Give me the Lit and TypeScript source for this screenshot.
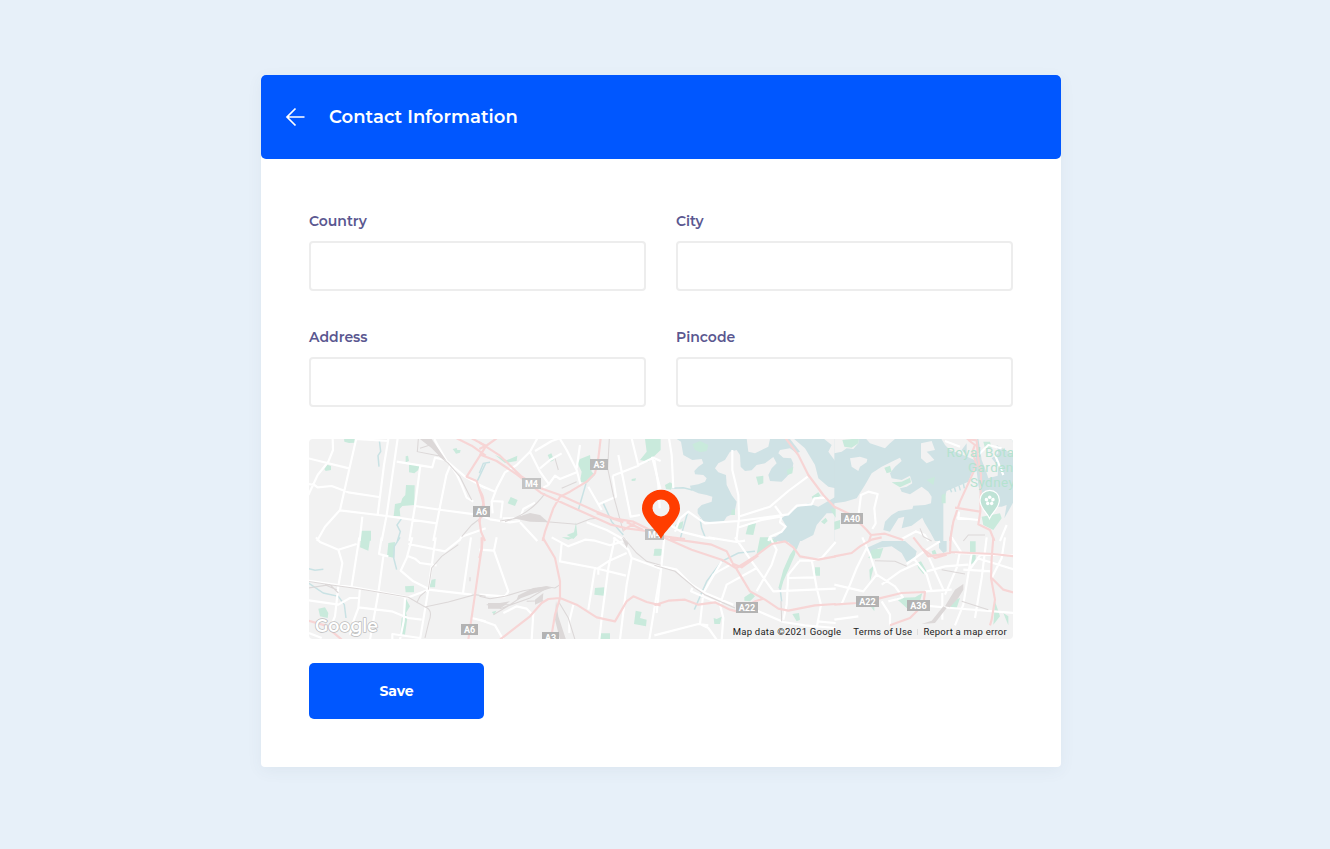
import { LitElement, html, svg, css } from "lit";
import { customElement } from "lit/decorators.js";

// The map is split in eight sheets; every sheet is drawn in thirds of a pixel.
type Sheet = {
  x: number; y: number;
  water?: string; land?: string; park?: string; creek?: string;
  street: string; yard?: string; rail?: string; highway: string;
};

const SHEETS: Sheet[] = [
  {
    x: -4, y: -4,
    park: "M117,10H149V23L132,24 118,20Z M58,102L67,89 78,93 78,105 62,108Z M302,64L309,62 312,78 302,82Z M312,88L344,89 340,105 328,115 312,112Z M303,150L329,151 328,210 292,213 284,222 286,243 266,243 270,207 288,203 292,190 301,180Z M168,287H198V317H166Z M443,42L455,39 457,45 467,45 465,53 453,56 448,49Z",
    creek: "M223,15L227,50 219,62 222,95 M290,250L276,270 286,290 277,318 M542,85L516,140",
    street: "M83,10L84,45 70,80 38,120 10,180 M10,70L132,100 M154,10L130,115 105,225 60,275 36,318 M10,147L28,150 38,157 80,153 130,172 222,186 M250,12L237,90 218,240 M278,10L245,240 230,318 M150,12L250,18 M275,80L382,97 390,68 420,75 M346,92L330,213 313,318 M437,88L424,120 405,215 385,318 M105,226L245,243 395,265 M330,213L410,225 510,238 M172,245L164,318 M437,90L455,118 470,150 485,188 505,200 M388,12L400,35 425,78 480,125 542,160 M542,280L470,305 462,318",
    yard: "M345,12L380,12 425,78 405,65 380,40Z",
    rail: "M340,12L337,50 400,62 M345,40L375,30 M400,60L430,85 465,125 500,195 M545,235L500,270 470,305",
    highway: "M455,10L500,32 542,62 M500,10L542,32 M542,35L485,125 515,138 530,185 538,215 M530,235L523,255 528,290 540,318",
  },
  {
    x: 171, y: -4,
    park: "M293,85L300,72 330,60 335,110 345,120 320,145 300,140 305,110Z M203,60L214,55 222,75 212,80Z M83,205L92,186 113,195 105,213Z M480,75L500,50 495,12H542V45L505,80Z M260,300L282,292 288,262 292,300 280,312Z M45,60L80,76 112,62 110,78 75,84Z M455,132L468,130 466,137 455,138Z",
    creek: "M318,145L295,225 M370,205L395,260 430,300 M-2,115L10,85 30,82",
    street: "M172,10L150,50 110,90 75,112 50,160 35,200 38,235 M150,50L165,80 180,110 205,145 M240,10L215,18 165,48 M-2,150L45,170 M36,198L68,200 62,250 M68,250L120,250 130,222 165,203 M240,12L260,45 290,105 302,150 M180,100L210,75 245,55 M205,150L225,122 240,132 290,112 M205,150L190,158 M455,10L475,92 398,122 M475,90L520,68 542,78 M398,122L408,185 358,207 M300,30L290,100 M325,155L365,225 M415,60L452,245 480,240 M516,65L542,165 M120,262L172,318 M320,262L380,285 440,318 M-2,240L30,253 90,262 120,258",
    yard: "M100,250L150,234 180,240 205,262 150,260Z",
    rail: "M75,260Q150,238 195,175 M60,258L140,245 200,260 290,268 330,252 350,250 M388,10L383,100 400,180 430,290 M225,70L235,105 M245,160L290,140",
    highway: "M50,10L22,30 -2,42 M-2,22L60,62 125,125 182,160 240,180 350,230 400,250 460,260 500,280 542,302 M-2,58L50,78 110,118 185,175 250,205 340,245 390,268 440,280 500,288 M362,10L355,70 345,115 320,140 270,170 240,185 220,220 195,290 188,318 M-2,165Q16,190 8,215L-2,262 M350,235L430,262 M430,285L470,262 M440,262L490,285",
  },
  {
    x: 346, y: -4,
    water: "M62,10L78,20 85,60 112,75 140,72 145,85 130,95 118,108 120,118 145,120 155,130 150,140 130,148 105,152 108,165 130,175 155,180 172,185 170,200 140,210 128,222 128,235 145,258 170,262 205,262 215,245 238,235 245,200 230,180 215,150 213,120 190,112 180,100 190,85 210,75 225,50 245,45 255,60 257,95 270,108 290,106 305,90 330,85 355,66 365,85 350,100 340,120 345,138 380,140 395,125 412,105 415,85 408,70 385,68 370,55 375,45 405,40 425,55 435,50 405,12 L365,10 345,12 340,35 320,45 300,55 280,50 275,10Z M415,10L450,40 480,90 490,130 520,155 542,160V80L520,50 530,30 505,10Z M542,185L490,215 460,205 430,215 380,250 395,275 370,300 345,318H440L475,300 485,270 515,235 542,235Z",
    park: "M112,28L135,18 160,30 155,48 135,52 120,45Z M303,125L325,122 325,145 310,150Z M30,150L45,142 53,147 48,164 33,162Z M272,298L280,268 303,265 295,300Z M395,105L415,95 412,115 398,120Z M470,185L490,172 497,182 475,195Z M498,260L512,248 518,258 508,268Z M60,270L85,258 82,280 65,285Z M525,222L542,218V248Z M230,225L240,222 240,240 228,240Z",
    creek: "M50,160L85,158 112,165 M98,232L76,310 M135,250L140,280 150,305",
    street: "M42,10L50,60 55,160 M-2,75L10,150 14,220 M232,45L232,105 250,180 252,250 244,318 M60,290L75,250 100,230 150,265 250,258 350,245 400,238 425,212 470,208 478,190 510,188 M248,278L320,255 375,245 M250,245L345,215 400,168 458,125 M360,213L380,240 375,262 392,275 380,290 345,305 340,318 M45,270L78,290 150,308 180,312",
    highway: "M392,10L430,60 460,120 505,180 542,220 M-2,300L90,312",
  },
  {
    x: 526, y: -4,
    water: "M-2,10H536V318H-2Z",
    land: "M72,10L70,25 55,42 35,40 20,50 -2,55V10Z M92,10L105,25 150,40 165,25 182,10Z M45,70L75,65 97,72 95,82 75,95 70,108 50,95Z M-2,205L30,200 65,190 90,150 110,115 140,95 170,80 195,68 200,78 180,95 165,115 170,130 200,135 225,122 232,145 215,155 195,160 200,170 225,178 260,155 280,170 290,185 288,205 270,210 235,212 232,222 190,228 170,240 150,260 145,285 165,290 190,250 208,245 200,280 230,272 262,248 268,262 285,290 300,318H-2Z M258,25L290,18 300,45 275,50 285,60 298,75 275,85 258,70Z M318,10H425L430,50 418,75 390,62 345,45 330,30Z M335,168L400,140 412,110 425,108 430,150 440,200 440,318H325V200Z M430,10H536V60L485,30 490,55 470,70 490,95 488,122 460,130 450,100 440,75Z M436,215L500,215 515,210 508,250 536,200V318H436Z M395,25L380,45 395,60Z",
    park: "M22,15L72,10 70,25 50,38 28,35Z M148,98L165,92 170,110 155,115Z M170,142L200,140 225,128 228,142 195,157Z M275,135L300,125 295,150Z M320,180L332,175V205H320Z M440,245L495,235 500,250 475,285 445,270Z M-2,260L15,255 15,280 -2,285Z M445,20L465,20 470,38 450,40Z",
    street: "M68,260L78,180 100,170 128,177 118,220 122,265 112,282 M200,312L245,288 M240,288L270,300 280,318 M365,248L430,255 M370,255L372,230 M330,18L375,35 M430,60L460,30 500,40 M480,60L505,120 M515,270L495,318",
    rail: "M255,280L265,305 290,318 M385,318L400,300 450,300 M344,318L352,270",
    creek: "M345,160L350,172 M358,157L362,170 M372,152L376,166 M385,145L388,160",
    highway: "M400,15L420,30 412,50 425,90 375,200 355,260 345,318 M395,12L425,16 428,60 438,120 436,230 430,268 465,285 478,318 M360,218L435,230 M-2,215L50,240 95,285 108,300 150,296 205,315 M108,300L102,318",
  },
  {
    x: -4, y: 99,
    park: "M168,-2H196L190,38 165,28Z M250,15L270,12 268,60 246,55Z M300,145L327,143V163H302Z M380,125L392,123 390,148 372,148Z M303,183L315,205 303,225 307,240 300,290 286,288 290,240 298,235Z M40,212L60,208 70,225 68,240 45,235Z",
    creek: "M285,-2L268,25 266,60 275,95 M10,92L30,97 55,94 M10,135L55,165 100,175 118,200 123,240",
    street: "M10,128L160,150 310,178 345,165 370,155 M163,-2L140,145 M33,-2L45,12 100,35 112,75 100,145 90,235 75,270 M100,35L155,18 M235,55L220,165 195,305 M230,-2L222,48 250,55 M322,-2L305,60 287,98 325,130 370,152 M310,18L420,40 465,5 M310,55L330,62 345,75 395,82 M392,-2L370,155 345,305 M498,-2L474,165 M370,155L500,170 M10,187L100,200 135,180 160,180 M165,150L160,210 145,250 135,290 M160,208L260,220 310,240 350,245 M300,178L296,250 285,305 M262,305L262,288 345,300 M500,240L542,250 M12,285L50,300",
    rail: "M10,130L80,141 160,152 310,178 M10,150L75,140 100,165 M60,140L95,155 M310,178L360,207 430,192 510,170 542,175 M335,195L345,175 362,160 M360,207Q385,215 372,250L360,300 M370,155L380,90 410,55 460,20 M495,118V130",
    highway: "M530,-2L530,30 510,170 490,305 M10,248L60,262 110,305",
  },
  {
    x: 171, y: 99,
    park: "M345,150L373,148 372,173 343,170Z M467,218L485,222 480,240 500,245 498,265 462,258Z M362,286H390V305H358Z M525,32H542V53H520Z M35,222L49,218 43,230Z M245,-2H285L265,5Z",
    street: "M50,-2L42,38 -2,35 M42,38L85,160 75,175 -2,170 M215,-2L265,25 315,5 345,8 390,22 430,10 M245,15L240,70 345,90 438,113 M405,-2L385,90 365,240 358,305 M345,90L325,215 M355,110L355,90 385,70 440,45 M400,-2L445,35 455,60 440,140 420,305 M455,60L542,92 M542,100L525,200 508,305 M280,200L268,250 268,285 M160,225L155,305 M-2,245L45,262 70,305 M70,225L110,205 140,212 155,228",
    yard: "M115,172L160,150 200,145 215,150 165,165 110,185Z M24,195H60L90,190 60,212H24Z M228,188L235,235 258,305H240L225,245Z M165,185L190,165 188,190 165,200Z M425,-2L445,15 440,30Z",
    rail: "M-2,175L30,182 75,175 130,158 200,146 225,150 240,140 M60,212L150,180 200,150 M20,200L90,200 120,180 M140,190L190,188 M235,190L265,240 285,305 M430,-2L470,45 500,70 542,82 M40,230L100,195",
    highway: "M188,-2L225,60 240,130 240,180 225,230 215,290 M60,305L150,235 185,195 205,183 240,180 290,200 350,238 405,250 440,190 460,175 500,192 542,202 M8,-2L5,35 -2,60",
  },
  {
    x: 346, y: 99,
    water: "M350,-2H440L425,35 400,12 370,10Z",
    park: "M315,-2L345,-2 368,10 305,48Z M425,20L420,50 385,130 378,155 370,150 385,95 405,50Z M480,88H495V113H480Z M268,178L290,163 300,175 285,190 268,188Z M412,228L432,225 435,245 425,250Z M176,240L185,243 200,236 195,258 178,258Z M-2,33H20V52H-2Z",
    creek: "M118,215L155,130 200,70 250,45 300,40 M375,150L380,190",
    street: "M28,-2L5,225 M240,-2L290,70 355,160 542,152 M160,-2L245,12 270,8 M235,75L190,100 175,110 145,165 135,258 160,270 185,305 M305,90L215,140 195,200 205,240 200,305 M345,-2L365,35 350,80 305,160 M160,262L130,258 -2,292 M432,70L400,110 395,200 385,245 M470,65L485,150 498,200 485,270 M400,120L478,118 M542,12L500,60 470,68 432,68 M-2,80L65,95 110,140 150,165 235,200 M112,150L108,160 190,195 M300,215L385,252 450,262 542,270 M485,250L542,255 M200,70L145,165",
    rail: "M-2,82L60,100 120,150 150,170 240,210 M378,190L380,250",
    highway: "M25,-2L110,35 200,65 245,92 M45,2L170,20 215,40 240,90 M245,90L300,55 350,18 390,10 415,28 435,55 490,65 542,55 M235,78L260,88 310,52 M240,85L285,160 330,185 370,212 400,218 480,202 542,198 M-2,202L40,188 90,185 130,200 180,193 225,215 245,220 300,190 325,182",
  },
  {
    x: 526, y: 99,
    water: "M95,30L150,5 200,0 245,40 240,60 215,72 200,45 170,25 130,30 105,48Z M312,-2H335V40L325,45 312,30Z",
    park: "M100,60L110,35 145,30 135,60 118,62Z M103,95L118,80 105,130Z M245,75L258,70 275,100 265,108 250,90Z M405,10H422V75L405,78Z M182,180L240,178 262,165 255,190 215,210Z M350,190L375,180 365,210 345,210Z M480,190L495,235 475,260Z M505,225L520,235V262Z M103,200L118,203 118,220Z M290,40L300,35 305,48 293,50Z",
    street: "M82,-2L105,50 125,110 180,145 205,180 M20,198L45,140 65,90 95,30 M215,78L275,35 315,10 M235,60L275,110 290,160 M140,140L195,100 250,75 M275,100L330,85 400,80 M270,160L350,155 M375,40L365,90 330,170 M410,45L385,200 360,262 M440,45L400,100 M-2,140L85,160 125,110 M270,203L350,210 540,225 M322,165L322,245 M455,-2L440,120 420,240 M510,-2L500,60 470,120 M280,55L325,155 M140,190L165,230 165,262 M-2,245L70,235 M360,45L540,52 M385,95L470,100 M425,60L540,95 M350,-2L380,45 M200,180L160,190",
    yard: "M385,138L360,155 330,205 345,208 370,180 385,155Z M260,258L290,248 325,205 335,210 300,255Z",
    rail: "M120,68L180,70 215,85 M320,95L390,108 M380,190L460,215",
    highway: "M-2,55L50,45 75,25 110,5 140,-2 M235,-2L280,55 345,45 347,-2 M260,30L300,60 335,50 M345,42L475,48 542,55 M475,-2L470,60 468,120 480,185 470,245 465,262 M-2,200L65,195 130,182 200,165 270,162 265,200 225,240 165,262 M470,120L505,155 542,165",
  },
];

const SHIELDS = [
  { x: 281, y: 20, w: 18, t: "A3", c: "#b9b9b9" },
  { x: 213, y: 39, w: 19, t: "M4", c: "#c4c4c4" },
  { x: 164, y: 67, w: 17, t: "A6", c: "#b3b3b3" },
  { x: 336, y: 90, w: 19, t: "M4", c: "#c0c0c0" },
  { x: 532, y: 74, w: 22, t: "A40", c: "#b3b3b3" },
  { x: 427, y: 163, w: 22, t: "A22", c: "#b3b3b3" },
  { x: 547, y: 157, w: 23, t: "A22", c: "#b3b3b3" },
  { x: 598, y: 161, w: 23, t: "A36", c: "#b3b3b3" },
  { x: 152, y: 185, w: 17, t: "A6", c: "#b3b3b3" },
  { x: 233, y: 193, w: 17, t: "A3", c: "#b3b3b3" },
];

type Layer = "water" | "land" | "park" | "creek" | "yard" | "rail" | "street" | "highway";

@customElement("location-map")
class LocationMap extends LitElement {
  static styles = css`
    :host { display: block; position: relative; height: 200px; border-radius: 4px; overflow: hidden; background: #f2f2f2; }
    .canvas { display: block; }
    .water { fill: #cfe2e5; }
    .land { fill: #f2f2f2; }
    .park { fill: #c9eadc; }
    .yard { fill: #dcd8d8; }
    .creek { fill: none; stroke: #c9e2e4; stroke-width: 4.5; }
    .rail { fill: none; stroke: #dcd8d8; stroke-width: 3.2; }
    .street { fill: none; stroke: #fff; stroke-width: 6.5; stroke-linejoin: round; }
    .highway { fill: none; stroke: #f7d5d5; stroke-width: 6.5; stroke-linejoin: round; }
    .shield { font: 700 9px Roboto, sans-serif; fill: #fff; text-anchor: middle; }
    .place { font: 400 13.5px Roboto, sans-serif; letter-spacing: 0.4px; fill: #b5e2d0; }
    .brand { font: 600 19px Montserrat, sans-serif; fill: #fff; stroke: #bdbdbd; stroke-width: 1.6px; paint-order: stroke; stroke-linejoin: round; }
    .legal { position: absolute; right: 6px; bottom: 1px; display: flex; align-items: center; font: 9.5px/13px Roboto, sans-serif; color: #222; white-space: nowrap; }
    .legal span { letter-spacing: 0.24px; }
    .rule { width: 1px; height: 6px; margin: 0 5px; background: #dcdcdc; }
    .data { margin-right: 12px; }
  `;

  private layer(name: Layer) {
    return SHEETS.filter((s) => s[name]).map(
      (s) => svg`<path class=${name} transform="translate(${s.x} ${s.y}) scale(.33333)" d=${s[name]}></path>`
    );
  }

  render() {
    const order: Layer[] = ["water", "land", "park", "creek", "street", "yard", "rail", "highway"];
    return html`
      <svg class="canvas" width="704" height="200" viewBox="0 0 704 200">
        ${order.map((name) => this.layer(name))}
        <text class="place" x="637.500" y="18">Royal Bota</text>
        <text class="place" x="659" y="33">Garden</text>
        <text class="place" x="661" y="48">Sydney</text>
        <path d="M680.5 79.500C678 73 671 69.500 671 61a9.700 9.700 0 0 1 19.400 0C690.400 69.500 683 73 680.500 79.500Z" fill="#bfe3d6" stroke="#fff" stroke-width="1.200"></path>
        ${[0, 72, 144, 216, 288].map(
          (a) => svg`<circle cx="680.700" cy="58.300" r="1.750" fill="#fff" transform="rotate(${a} 680.700 61.700)"></circle>`
        )}
        ${SHIELDS.map(
          (s) => svg`<rect x=${s.x} y=${s.y} width=${s.w} height="11" fill=${s.c}></rect>
            <text class="shield" x=${s.x + s.w / 2} y=${s.y + 8.800}>${s.t}</text>`
        )}
        <text class="brand" x="6" y="192.500" textLength="63" lengthAdjust="spacingAndGlyphs">Google</text>
        <path fill="#ff3d00" fill-rule="evenodd" d="M352 100C347.500 90.500 333 80.500 333 69.500a19 18.700 0 0 1 38 0C371 80.500 356.500 90.500 352 100ZM352 60.500a8.500 8.500 0 1 0 0 17a8.500 8.500 0 1 0 0-17Z"></path>
      </svg>
      <div class="legal">
        <span class="data">Map data ©2021 Google</span><span>Terms of Use</span><i class="rule"></i><span>Report a map error</span>
      </div>
    `;
  }
}

@customElement("app-root")
class AppRoot extends LitElement {
  static styles = css`
    :host { display: flex; justify-content: center; box-sizing: border-box; min-height: 849px; padding: 75px 8px 82px 0; background: #e7f0f9; font-family: Montserrat, Inter, sans-serif; }
    .card { box-sizing: border-box; width: 800px; height: 692px; background: #fff; border-radius: 4px; box-shadow: 0 4px 16px rgba(60, 80, 100, 0.06); }
    .header { display: flex; align-items: center; gap: 24px; height: 84px; padding-left: 24px; box-sizing: border-box; background: #0057ff; color: #fff; border-radius: 5px; }
    .title { margin: 0; font-size: 18px; font-weight: 600; line-height: 24px; letter-spacing: 0.03px; }
    .body { padding: 52px 48px 0; }
    .fields { display: grid; grid-template-columns: 1fr 1fr; gap: 36px 30px; margin-bottom: 32px; }
    .field { display: flex; flex-direction: column; gap: 10px; }
    .label { font-size: 14px; font-weight: 600; line-height: 20px; color: #5a5790; }
    .input { box-sizing: border-box; width: 100%; height: 50px; border: 2px solid #ededed; border-radius: 4px; background: #fff; padding: 0 12px; outline: none; }
    .save { display: block; width: 175px; height: 56px; margin-top: 24px; border: 0; border-radius: 5px; background: #0057ff; color: #fff; font: 700 14px Montserrat, Inter, sans-serif; letter-spacing: -0.1px; }
  `;

  render() {
    return html`
      <main class="card">
        <header class="header">
          <svg width="20" height="20" viewBox="0 0 20 20" fill="none" stroke="#fff" stroke-width="1.700">
            <path d="M19.500 10H2M10.500 1.500L2 10L10.500 18.500"></path>
          </svg>
          <h1 class="title">Contact Information</h1>
        </header>
        <div class="body">
          <div class="fields">
            ${["Country", "City", "Address", "Pincode"].map(
              (name) => html`<label class="field"><span class="label">${name}</span><input class="input" /></label>`
            )}
          </div>
          <location-map></location-map>
          <button class="save">Save</button>
        </div>
      </main>
    `;
  }
}
